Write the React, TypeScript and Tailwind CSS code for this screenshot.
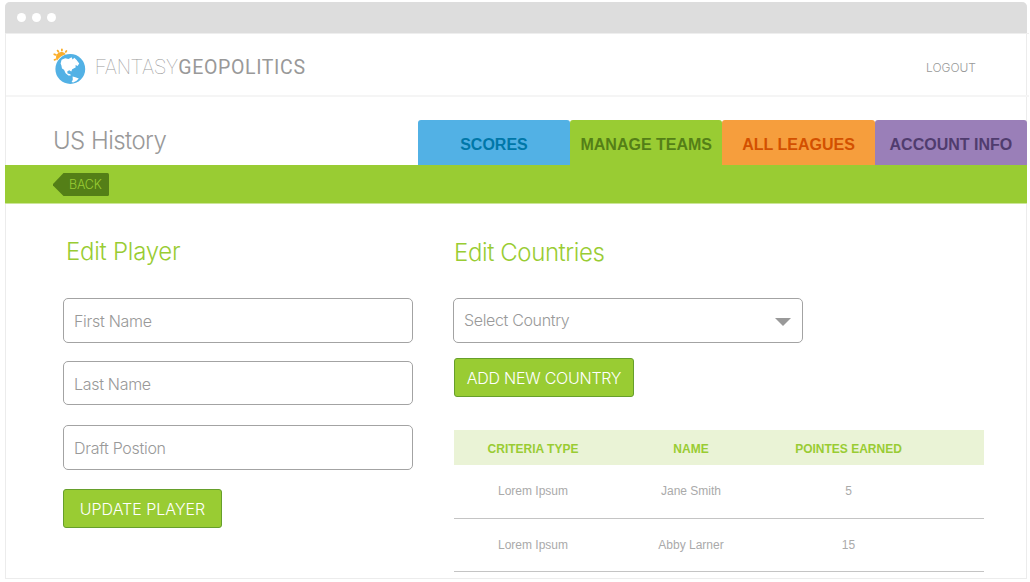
import React from "react";

const light = "font-['Inter','Liberation_Sans',sans-serif] font-light";

const tabs = [
  { label: "SCORES", style: "bg-[#52b1e5] text-[#0077a8]" },
  { label: "MANAGE TEAMS", style: "bg-[#9c3] text-[#547f17]" },
  { label: "ALL LEAGUES", style: "bg-[#f69e3d] text-[#d35000]" },
  { label: "ACCOUNT INFO", style: "bg-[#9a7fb8] text-[#503c6e]" },
];

const rows = [
  { type: "Lorem Ipsum", name: "Jane Smith", points: "5", height: "h-[54px] pb-[2px]" },
  { type: "Lorem Ipsum", name: "Abby Larner", points: "15", height: "h-[53px] pb-px" },
];

function Logo() {
  return (
    <svg width="34" height="38" viewBox="0 0 34 38" className="mt-[4px] shrink-0">
      <g stroke="#fbae2b" strokeWidth="1.8" strokeLinecap="round">
        <path d="M1.5 11.8 2.5 11.5M1.3 6.3 2.9 6.9M4.6 2.6 5.4 3.8M8.9 1.3V2.6M13.4 2.9 12.7 3.9" />
      </g>
      <path d="M4 12.5a5.3 5.3 0 0 1 8.8-6.3Q7.5 7.5 4 12.5Z" fill="#fbae2b" />
      <circle cx="17.3" cy="21" r="14.9" fill="#52b1e5" />
      <path
        d="M7.6 15.5 8.6 11.8 12.2 10.2 15.5 11 18.6 9.2 19.6 11.4 21.3 9.8 23.6 12 26.2 15.4 24.6 18 22.6 16.9 22.6 19.4 19.2 21.2 18.3 23.6 16.2 22.2 14.2 23.4 14.6 25.6 17.4 26.2 17.8 27.6 15.4 27.6 12.6 25.2 11 21.8 9 20.4 8.4 17.5Z"
        fill="#fff"
      />
      <path d="M19.6 28.6 22.4 29.2 25.8 30.6 23.6 32.8 20.2 34.6 18.6 34 19.8 31.8Z" fill="#fff" />
    </svg>
  );
}

function Field({ label, height }: { label: string; height: string }) {
  return (
    <div className={`${light} ${height} flex w-[350px] items-center rounded-[5px] border border-[#a3a3a3] pl-[10px] pt-px text-[16px] tracking-[-0.3px] text-[#999]`}>
      {label}
    </div>
  );
}

export default function App() {
  return (
    <div className="h-[582px] w-[1030px] overflow-hidden bg-white pl-[5px] pt-[2px] font-['Liberation_Sans',Arial,sans-serif]">
      <div className="flex h-[577px] w-[1022px] flex-col rounded-t-[5px] border border-t-0 border-[#ececec]">
        <div className="-mx-px flex h-[31px] shrink-0 items-center gap-[6px] rounded-t-[5px] bg-[#ddd] pl-[12px]">
          <span className="size-[9px] rounded-full bg-white" />
          <span className="size-[9px] rounded-full bg-white" />
          <span className="size-[9px] rounded-full bg-white" />
        </div>
        <header className="-mr-[3px] flex h-[64px] shrink-0 items-center border-b-2 border-t border-b-[#f5f5f5] border-t-[#eee] pl-[47px] pr-[53px]">
          <Logo />
          <div className="ml-[8px] mt-[7px] flex font-['Roboto',sans-serif] text-[19.5px] leading-none text-[#999]">
            <span className="font-thin tracking-[0.4px]">FANTASY</span>
            <span className="tracking-[0.65px]">GEOPOLITICS</span>
          </div>
          <span className={`${light} ml-auto mt-[6px] text-[12px] text-[#999]`}>LOGOUT</span>
        </header>
        <div className="-mr-px flex h-[68px] shrink-0 items-end justify-between pl-[47px]">
          <h1 className={`${light} mb-[6px] text-[24px] tracking-[-0.55px] text-[#999]`}>US History</h1>
          <nav className="flex">
            {tabs.map((t) => (
              <div key={t.label} className={`flex h-[45px] w-[152.3px] items-center justify-center rounded-t-[3px] pt-[4px] text-[16px] font-bold ${t.style}`}>
                {t.label}
              </div>
            ))}
          </nav>
        </div>
        <div className="-mx-px h-[38px] shrink-0 bg-[#9c3] pl-[48px] pt-[8px]">
          <div className="relative flex h-[23px] w-[56px] items-center">
            <svg className="absolute inset-0" width="56" height="23" viewBox="0 0 56 23">
              <path d="M10.5 0H54.5Q56 0 56 1.5V21.5Q56 23 54.5 23H10.5L0 12.5V11Z" fill="#547f17" />
            </svg>
            <span className={`${light} relative pl-[16px] pt-[2px] text-[12.5px] tracking-[-0.15px] text-[#9c3]`}>BACK</span>
          </div>
        </div>
        <main className="-mx-px flex border-t border-[#cce599] pl-[58px] pt-[32px]">
          <section className="w-[390px]">
            <h2 className={`${light} ml-[3px] h-[62px] text-[24px] leading-[32px] tracking-[-0.25px] text-[#9c3]`}>Edit Player</h2>
            <Field label="First Name" height="h-[45px]" />
            <div className="h-[18px]" />
            <Field label="Last Name" height="h-[44px]" />
            <div className="h-[20px]" />
            <Field label="Draft Postion" height="h-[45px]" />
            <div className={`${light} mt-[19px] flex h-[39px] w-[159px] items-center justify-center rounded-[3px] border border-[#669f2b] bg-[#9c3] text-[16px] text-white`}>
              UPDATE PLAYER
            </div>
          </section>
          <section className="w-[531px]">
            <h2 className={`${light} ml-px h-[62px] text-[24px] leading-[33px] tracking-[-0.4px] text-[#9c3]`}>Edit Countries</h2>
            <div className={`${light} flex h-[45px] w-[350px] items-center justify-between rounded-[5px] border border-[#a3a3a3] pl-[10px] pr-[11px] text-[16px] tracking-[-0.35px] text-[#999]`}>
              <span className="pb-px">Select Country</span>
              <svg width="16" height="8" viewBox="0 0 16 8" className="mt-[3px]">
                <path d="M0 0H16L8 8Z" fill="#999" />
              </svg>
            </div>
            <div className={`${light} ml-px mt-[15px] flex h-[39px] w-[180px] items-center justify-center rounded-[3px] border border-[#669f2b] bg-[#9c3] text-[16px] tracking-[-0.25px] text-white`}>
              ADD NEW COUNTRY
            </div>
            <div className="ml-px mt-[33px] text-center text-[12px]">
              <div className="grid h-[35px] grid-cols-[158px_158px_157px_57px] items-center bg-[#eaf3d6] pt-[2px] font-bold text-[#9c3]">
                <span>CRITERIA TYPE</span>
                <span>NAME</span>
                <span>POINTES EARNED</span>
              </div>
              {rows.map((r) => (
                <div key={r.name} className={`${r.height} grid grid-cols-[158px_158px_157px_57px] items-center border-b border-[#c4c4c4] text-[#aaa]`}>
                  <span>{r.type}</span>
                  <span>{r.name}</span>
                  <span>{r.points}</span>
                </div>
              ))}
            </div>
          </section>
        </main>
      </div>
    </div>
  );
}
